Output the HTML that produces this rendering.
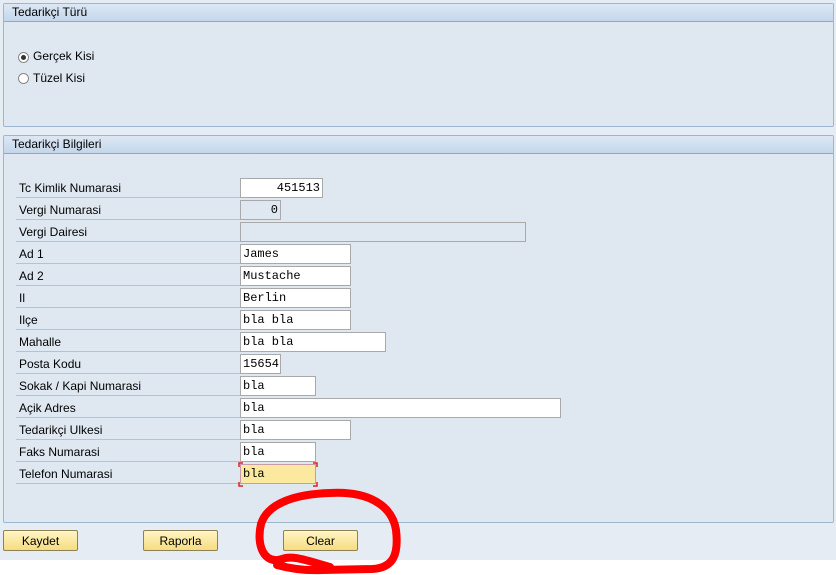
<!DOCTYPE html>
<html><head><meta charset="utf-8"><style>
body{margin:0;width:836px;height:575px;background:#fff;font-family:"Liberation Sans",Tahoma,sans-serif;font-size:12px;color:#000;position:relative;overflow:hidden}
.bg{position:absolute;left:0;top:0;width:836px;height:560px;background:#e5ecf3}
.panel{position:absolute;left:3px;width:829px;background:#dfe8f1;border:1px solid #9eb6cf;border-radius:2px}
.hd{height:17px;border-bottom:1px solid #8fa9c4;background:linear-gradient(#dde8f4,#c4d7ea);padding-left:8px;line-height:17px;color:#000}
.lab{position:absolute;left:16px;width:224px;height:21px;border-bottom:1px solid #b5c2cf;line-height:22px;padding-left:3px;box-sizing:border-box}
.in{position:absolute;left:240px;height:18px;border:1px solid #a9a9a9;background:#fff;font-family:"Liberation Mono",monospace;font-size:12px;line-height:18px;padding:0 2px;box-sizing:border-box;height:20px}
.ro{background:#dfe8f1}
.btn{position:absolute;top:530px;height:21px;border:1px solid #8d8256;border-radius:2px;background:linear-gradient(#fff6c4,#f6dc82);text-align:center;line-height:20px;box-sizing:border-box}
.rad{position:absolute;left:18px;width:11px;height:11px;border:1px solid #888;border-radius:50%;background:#fff;box-sizing:border-box}
</style></head><body>
<div class="bg"></div>
<div class="panel" style="top:3px;height:122px"><div class="hd">Tedarikçi Türü</div></div>
<div class="rad" style="top:52px"><div style="width:5px;height:5px;border-radius:50%;background:#333;margin:2px"></div></div>
<div style="position:absolute;left:33px;top:49px">Gerçek Kisi</div>
<div class="rad" style="top:73px"></div>
<div style="position:absolute;left:33px;top:71px">Tüzel Kisi</div>
<div class="panel" style="top:135px;height:386px"><div class="hd">Tedarikçi Bilgileri</div></div>

<div class="lab" style="top:177px">Tc Kimlik Numarasi</div><div class="in" style="top:178px;width:83px;text-align:right">451513</div>
<div class="lab" style="top:199px">Vergi Numarasi</div><div class="in ro" style="top:200px;width:41px;text-align:right">0</div>
<div class="lab" style="top:221px">Vergi Dairesi</div><div class="in ro" style="top:222px;width:286px"></div>
<div class="lab" style="top:243px">Ad 1</div><div class="in" style="top:244px;width:111px">James</div>
<div class="lab" style="top:265px">Ad 2</div><div class="in" style="top:266px;width:111px">Mustache</div>
<div class="lab" style="top:287px">Il</div><div class="in" style="top:288px;width:111px">Berlin</div>
<div class="lab" style="top:309px">Ilçe</div><div class="in" style="top:310px;width:111px">bla bla</div>
<div class="lab" style="top:331px">Mahalle</div><div class="in" style="top:332px;width:146px">bla bla</div>
<div class="lab" style="top:353px">Posta Kodu</div><div class="in" style="top:354px;width:41px">15654</div>
<div class="lab" style="top:375px">Sokak / Kapi Numarasi</div><div class="in" style="top:376px;width:76px">bla</div>
<div class="lab" style="top:397px">Açik Adres</div><div class="in" style="top:398px;width:321px">bla</div>
<div class="lab" style="top:419px">Tedarikçi Ulkesi</div><div class="in" style="top:420px;width:111px">bla</div>
<div class="lab" style="top:441px">Faks Numarasi</div><div class="in" style="top:442px;width:76px">bla</div>
<div class="lab" style="top:463px">Telefon Numarasi</div><div class="in" style="top:464px;width:76px;background:#fbe9a0;border-color:#c9a;">bla</div>
<svg style="position:absolute;left:238px;top:462px" width="80" height="25"><path d="M1 5V1H5M75 1H79V5M1 20V24H5M75 24H79V20" stroke="#d22" stroke-width="1.5" fill="none"/></svg>

<div class="btn" style="left:3px;width:75px">Kaydet</div>
<div class="btn" style="left:143px;width:75px">Raporla</div>
<div class="btn" style="left:283px;width:75px">Clear</div>
<svg style="position:absolute;left:0;top:0" width="836" height="575"><path d="M330 567C305 560 292 555 282 559C264 565 256 545 261 524C268 502 298 494 330 493C368 491 392 505 396 530C399 555 393 568 372 569L322 570C302 571 288 568 277 565" stroke="#f00" stroke-width="8" fill="none" stroke-linecap="round" stroke-linejoin="round"/></svg>
</body></html>
